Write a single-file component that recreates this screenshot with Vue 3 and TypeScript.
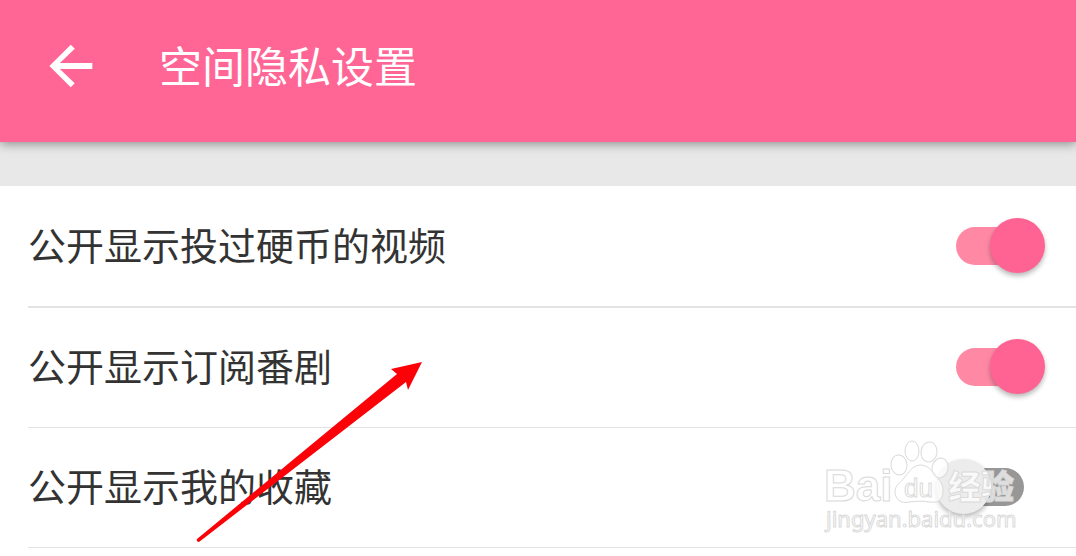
<script setup lang="ts">
import { ref } from 'vue'

interface Setting {
  id: string
  label: string
  enabled: boolean
}

const settings = ref<Setting[]>([
  { id: 'coins', label: '公开显示投过硬币的视频', enabled: true },
  { id: 'bangumi', label: '公开显示订阅番剧', enabled: true },
  { id: 'favorites', label: '公开显示我的收藏', enabled: false },
])
</script>

<template>
  <div class="page">
    <header class="bar">
      <button class="back" type="button" aria-label="返回">
        <svg viewBox="0 0 24 24" aria-hidden="true">
          <path d="M20 10.9H7.83l5.59-5.4L11.9 4l-8 8 8 8 1.5-1.5L7.83 13.1H20v-2.2z" />
        </svg>
      </button>
      <h1>空间隐私设置</h1>
    </header>

    <main class="list">
      <div v-for="item in settings" :key="item.id" class="row">
        <label :for="item.id">{{ item.label }}</label>
        <input :id="item.id" v-model="item.enabled" class="switch" type="checkbox" role="switch" />
      </div>

      <svg class="pointer" viewBox="0 0 230 184" aria-hidden="true">
        <path d="M2 179 L202 14 L196 9 L227 2 L213 30 L211 22 L4 182 Q1 182 2 179Z" />
      </svg>

      <svg class="mark" viewBox="0 0 204 100" aria-hidden="true">
        <g class="ink">
          <text class="brand" x="4" y="65">Bai</text>
          <ellipse cx="79" cy="29" rx="8" ry="10" transform="rotate(-8 79 29)" />
          <ellipse cx="92" cy="15" rx="7" ry="10" />
          <ellipse cx="109" cy="16" rx="8" ry="10" transform="rotate(8 109 16)" />
          <ellipse cx="120" cy="32" rx="8" ry="10" transform="rotate(14 120 32)" />
          <path d="M100 29 C107 29 111 33 115 39 C119 44 124 48 123 57 C122 65 117 67 110 66 C104 65 96 65 89 66 C81 68 75 63 75 56 C75 49 80 47 84 42 C89 36 92 30 100 29Z" />
          <text class="du" x="84" y="61">du</text>
          <text class="cn" x="128" y="63">经验</text>
          <text class="url" x="6" y="91">jingyan.baidu.com</text>
        </g>
      </svg>
    </main>
  </div>
</template>

<style>
body {
  margin: 0;
  background: #fff;
}
</style>

<style scoped>
.page {
  min-height: 100vh;
  background: #fff;
  color: #333;
  font-family: "Noto Sans CJK SC", sans-serif;
}

.bar {
  position: relative;
  z-index: 1;
  display: flex;
  align-items: center;
  gap: 56px;
  box-sizing: border-box;
  min-height: 142px;
  padding: 0 39px 10px;
  background: #ff6696;
  box-shadow: 0 2px 10px rgba(0, 0, 0, 0.4);
}

.back {
  display: flex;
  padding: 0;
  border: 0;
  background: none;
}

.back svg {
  width: 64px;
  height: 64px;
  fill: #fff;
}

h1 {
  margin: 0;
  padding-bottom: 4px;
  color: #fff;
  font-size: 43px;
  font-weight: 400;
  line-height: 64px;
}

.list {
  position: relative;
  border-top: 44px solid #e8e8e8;
}

.row {
  display: flex;
  align-items: center;
  justify-content: space-between;
  height: 117px;
  margin-left: 28px;
  padding: 0 30px 2px 0;
  border-bottom: 1px solid #e3e3e3;
}

.row:first-child {
  height: 120px;
  padding-bottom: 0;
  border-bottom-width: 2px;
}

label {
  padding-bottom: 4px;
  font-size: 38px;
  line-height: 56px;
}

.switch {
  appearance: none;
  position: relative;
  width: 110px;
  height: 56px;
  margin: 0;
}

.switch::before {
  content: "";
  position: absolute;
  inset: 9px 22px 9px 20px;
  border-radius: 19px;
  background: #979797;
}

.switch::after {
  content: "";
  position: absolute;
  top: 0;
  left: 0;
  width: 55px;
  height: 55px;
  border-radius: 50%;
  background: #ececec;
  box-shadow: 0 3px 5px rgba(0, 0, 0, 0.28);
}

.switch:checked::before {
  background: #ff89a5;
}

.switch:checked::after {
  left: 54px;
  background: #ff6393;
}

.pointer {
  position: absolute;
  top: 174px;
  left: 195px;
  width: 230px;
  height: 184px;
  fill: #fb0209;
  pointer-events: none;
}

.mark {
  position: absolute;
  right: 52px;
  bottom: 12px;
  width: 204px;
  height: 100px;
  overflow: visible;
  pointer-events: none;
}

.ink {
  fill: rgba(255, 255, 255, 0.7);
  stroke: #dadada;
  stroke-width: 1;
}

.brand {
  font: bold 44px "Liberation Sans", sans-serif;
}

.du {
  font: 26px "Liberation Sans", sans-serif;
}

.cn {
  font: 900 33px "Noto Sans CJK SC", sans-serif;
}

.url {
  font: 22px "Noto Sans", sans-serif;
}
</style>
